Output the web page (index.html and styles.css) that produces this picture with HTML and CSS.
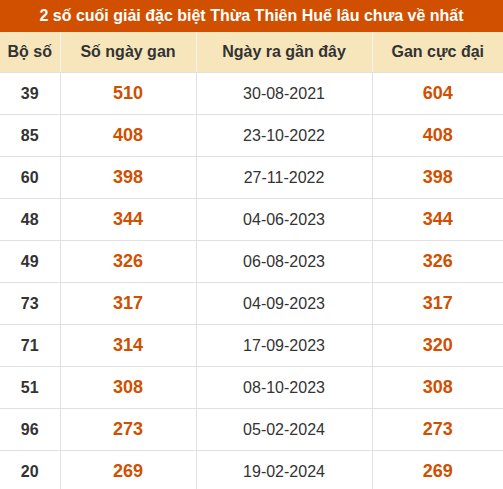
FILE: index.html
```html
<!DOCTYPE html>
<html>
<head>
<meta charset="utf-8">
<link rel="stylesheet" href="styles.css">
</head>
<body>
<div class="box">
  <div class="title">2 số cuối giải đặc biệt Thừa Thiên Huế lâu chưa về nhất</div>
  <table class="gan">
    <colgroup>
      <col class="c1"><col class="c2"><col class="c3"><col class="c4">
    </colgroup>
    <thead>
      <tr><th>Bộ số</th><th>Số ngày gan</th><th>Ngày ra gần đây</th><th>Gan cực đại</th></tr>
    </thead>
    <tbody>
      <tr><td class="num">39</td><td class="hl">510</td><td>30-08-2021</td><td class="hl">604</td></tr>
      <tr><td class="num">85</td><td class="hl">408</td><td>23-10-2022</td><td class="hl">408</td></tr>
      <tr><td class="num">60</td><td class="hl">398</td><td>27-11-2022</td><td class="hl">398</td></tr>
      <tr><td class="num">48</td><td class="hl">344</td><td>04-06-2023</td><td class="hl">344</td></tr>
      <tr><td class="num">49</td><td class="hl">326</td><td>06-08-2023</td><td class="hl">326</td></tr>
      <tr><td class="num">73</td><td class="hl">317</td><td>04-09-2023</td><td class="hl">317</td></tr>
      <tr><td class="num">71</td><td class="hl">314</td><td>17-09-2023</td><td class="hl">320</td></tr>
      <tr><td class="num">51</td><td class="hl">308</td><td>08-10-2023</td><td class="hl">308</td></tr>
      <tr><td class="num">96</td><td class="hl">273</td><td>05-02-2024</td><td class="hl">273</td></tr>
      <tr><td class="num">20</td><td class="hl">269</td><td>19-02-2024</td><td class="hl">269</td></tr>
    </tbody>
  </table>
</div>
</body>
</html>
```

FILE: styles.css
```css
html, body {
  margin: 0;
  padding: 0;
  background: #ffffff;
}
body {
  font-family: "Liberation Sans", Arial, sans-serif;
  color: #333333;
}
.box {
  width: 503px;
}
.title {
  background: #d05000;
  color: #ffffff;
  font-weight: bold;
  font-size: 16px;
  height: 32px;
  line-height: 32px;
  text-align: center;
  white-space: nowrap;
}
.gan {
  width: 503px;
  border-collapse: collapse;
  table-layout: fixed;
}
.c1 { width: 60px; }
.c2 { width: 136px; }
.c3 { width: 176px; }
.c4 { width: 131px; }
.gan th {
  background: #f7e6bb;
  font-weight: bold;
  font-size: 16px;
  color: #333333;
  height: 40px;
  padding: 0;
  border-left: 1px solid #f2f2f2;
  border-bottom: 1px solid #e0e0e0;
}
.gan th:first-child { border-left: none; }
.gan td {
  height: 41px;
  padding: 0;
  text-align: center;
  font-size: 16px;
  color: #333333;
  border-left: 1px solid #e0e0e0;
  border-bottom: 1px solid #e0e0e0;
}
.gan td:first-child { border-left: none; }
.gan td.num { font-weight: bold; }
.gan td.hl {
  color: #d05000;
  font-weight: bold;
  font-size: 18px;
}
```
